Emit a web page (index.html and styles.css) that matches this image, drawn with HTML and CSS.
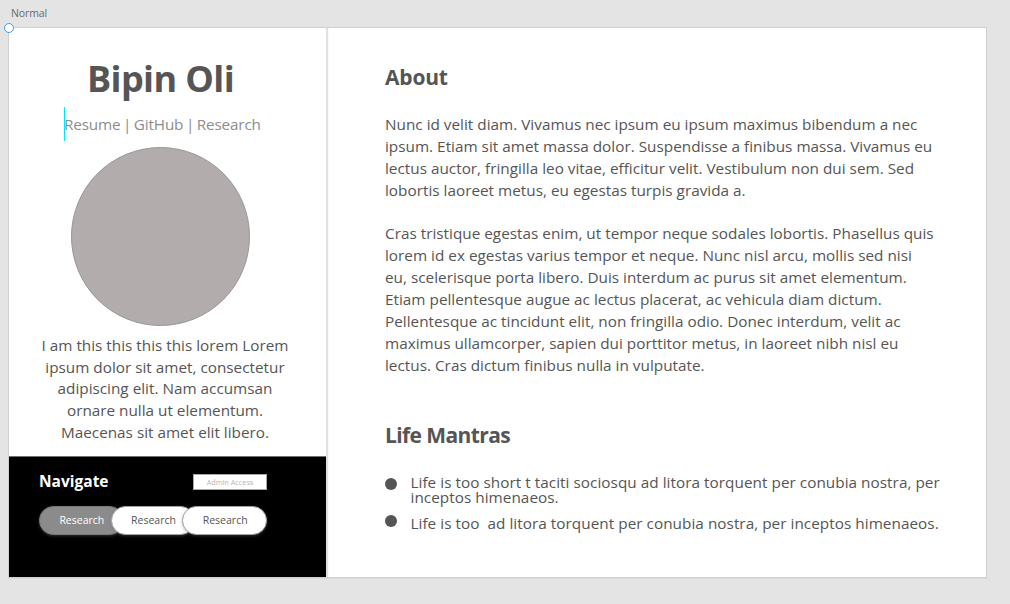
FILE: index.html
```html
<!DOCTYPE html>
<html lang="en">
<head>
<meta charset="utf-8">
<title>Bipin Oli</title>
<link rel="stylesheet" href="styles.css">
</head>
<body>
<div class="artboard-label">Normal</div>
<div class="artboard">
  <span class="handle"></span>
  <aside class="sidebar">
    <div class="profile">
      <h1 class="name">Bipin Oli</h1>
      <p class="links"><span class="caret"></span>Resume | GitHub | Research</p>
      <div class="avatar"></div>
      <p class="bio">I am this this this this lorem Lorem<br>ipsum dolor sit amet, consectetur<br>adipiscing elit. Nam accumsan<br>ornare nulla ut elementum.<br>Maecenas sit amet elit libero.</p>
    </div>
    <nav class="nav">
      <div class="nav-head">
        <h3 class="nav-title">Navigate</h3>
        <button class="admin">Admin Access</button>
      </div>
      <div class="tabs">
        <span class="tab active">Research</span>
        <span class="tab">Research</span>
        <span class="tab">Research</span>
      </div>
    </nav>
  </aside>
  <main class="content">
    <h2 class="heading">About</h2>
    <p class="text">Nunc id velit diam. Vivamus nec ipsum eu ipsum maximus bibendum a nec<br>ipsum. Etiam sit amet massa dolor. Suspendisse a finibus massa. Vivamus eu<br>lectus auctor, fringilla leo vitae, efficitur velit. Vestibulum non dui sem. Sed<br>lobortis laoreet metus, eu egestas turpis gravida a.</p>
    <p class="text">Cras tristique egestas enim, ut tempor neque sodales lobortis. Phasellus quis<br>lorem id ex egestas varius tempor et neque. Nunc nisl arcu, mollis sed nisi<br>eu, scelerisque porta libero. Duis interdum ac purus sit amet elementum.<br>Etiam pellentesque augue ac lectus placerat, ac vehicula diam dictum.<br>Pellentesque ac tincidunt elit, non fringilla odio. Donec interdum, velit ac<br>maximus ullamcorper, sapien dui porttitor metus, in laoreet nibh nisl eu<br>lectus. Cras dictum finibus nulla in vulputate.</p>
    <h2 class="heading mantras-title">Life Mantras</h2>
    <ul class="mantras">
      <li class="mantra"><i class="dot"></i><span>Life is too short t taciti sociosqu ad litora torquent per conubia nostra, per<br>inceptos himenaeos.</span></li>
      <li class="mantra second"><i class="dot"></i><span>Life is too&nbsp; ad litora torquent per conubia nostra, per inceptos himenaeos.</span></li>
    </ul>
  </main>
</div>
</body>
</html>
```

FILE: styles.css
```css
* { box-sizing: border-box; margin: 0; padding: 0; }
body {
  width: 1010px;
  height: 604px;
  overflow: hidden;
  background: #e4e4e4;
  color: #555;
  font-family: "Open Sans", "Noto Sans", sans-serif;
  font-size: 15.3px;
  white-space: nowrap;
}
.artboard-label {
  height: 28px;
  padding: 5px 0 0 11px;
  font-size: 10.5px;
  line-height: 16px;
  letter-spacing: -.1px;
  color: #6a6a6a;
}
.artboard {
  position: relative;
  display: flex;
  width: 977px;
  height: 549px;
  margin-left: 9px;
  background: #fff;
  box-shadow: 0 0 0 1px #d0d0d0, 0 1px 0 1px #dadada;
}
.handle {
  position: absolute;
  z-index: 1;
  left: -5px;
  top: -5px;
  width: 10px;
  height: 10px;
  border: 1.5px solid #3da2ea;
  border-radius: 50%;
  background: #fff;
}
.sidebar {
  display: flex;
  flex-direction: column;
  width: 317px;
  box-shadow: 1px 0 1px 1px rgba(0, 0, 0, .12);
  clip-path: inset(0 -4px 0 0);
}
.profile { height: 428px; padding-top: 26px; background: #fff; }
.name {
  width: 303px;
  font-size: 36px;
  line-height: 50px;
  letter-spacing: -.6px;
  text-align: center;
}
.links {
  position: relative;
  width: 197px;
  margin: 9px 0 0 55px;
  line-height: 22px;
  letter-spacing: -.17px;
  word-spacing: -1.2px;
  color: #8d8d8d;
}
.caret {
  position: absolute;
  left: 0;
  top: -6px;
  width: 1px;
  height: 34px;
  background: #00e5ff;
}
.avatar {
  width: 179px;
  height: 179px;
  margin: 12px 0 0 62px;
  border: 1px solid #979797;
  border-radius: 50%;
  background: #b2acac;
}
.bio {
  width: 312px;
  margin-top: 8.8px;
  line-height: 21.85px;
  text-align: center;
}
.nav {
  height: 121px;
  padding: 13px 59px 0 30px;
  border-top: 1px solid #707070;
  background: #000;
}
.nav-head { display: flex; justify-content: space-between; align-items: flex-start; height: 36px; }
.nav-title { font-size: 15.5px; line-height: 22px; color: #fff; }
.admin {
  width: 74px;
  height: 16px;
  margin-top: 4px;
  border: 1px solid #a8a8a8;
  background: #fff;
  color: #b5b5b5;
  font-family: inherit;
  font-size: 7.3px;
  line-height: 14px;
}
.tabs { display: flex; }
.tab {
  width: 85px;
  height: 29px;
  padding-left: 1px;
  border: 1px solid #a0a0a0;
  border-radius: 15px;
  background: #fff;
  box-shadow: 0 1px 3px rgba(112, 112, 112, .4);
  font-size: 10.5px;
  line-height: 26px;
  text-align: center;
}
.tab + .tab { margin-left: -13px; }
.tab.active { border-color: #777; background: #8b8b8b; color: #fff; }
.content { padding: 35px 0 0 59px; }
.heading { font-size: 21px; line-height: 28px; letter-spacing: -.2px; margin-bottom: 22.8px; }
.text { margin-bottom: 21.3px; line-height: 21.97px; letter-spacing: .01px; }
.mantras-title { margin: 44.3px 0 26px; letter-spacing: -.6px; }
.mantras { list-style: none; }
.mantra { display: flex; line-height: 15px; letter-spacing: .04px; }
.second { margin-top: 11px; }
.dot {
  width: 12px;
  height: 12px;
  margin: 3px 13.5px 0 0;
  border-radius: 50%;
  background: #555;
}
.second .dot { margin-top: -1px; }
```
